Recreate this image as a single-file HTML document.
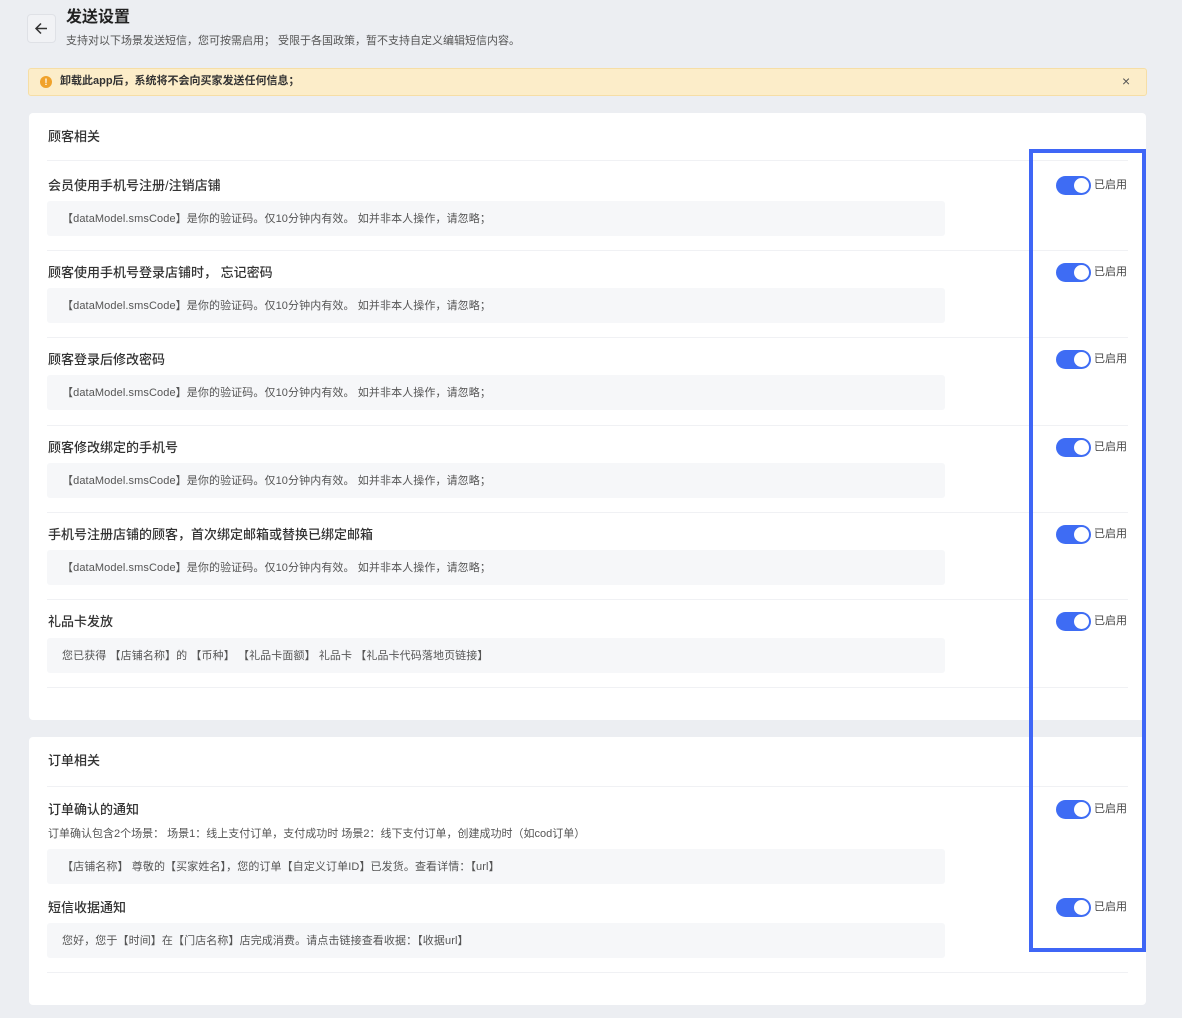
<!DOCTYPE html>
<html><head><meta charset="utf-8"><style>
*{margin:0;padding:0;box-sizing:border-box}
body{width:1182px;height:1018px;background:#eceef2;font-family:"Liberation Sans","Noto Sans CJK SC",sans-serif;position:relative;overflow:hidden;color:#333}
.a{position:absolute;white-space:nowrap}
.card{position:absolute;left:29px;width:1117px;background:#fff;border-radius:4px}
.hr{position:absolute;left:47px;width:1081px;height:1px;background:#f0f1f4}
.t{position:absolute;left:48px;font-size:13px;font-weight:500;color:#333;line-height:16px}
.box{position:absolute;left:47px;width:898px;height:35px;background:#f6f7f9;border-radius:3px;font-size:11px;color:#555;line-height:36px;padding-left:15px;white-space:nowrap;letter-spacing:0.1px}
.tg{position:absolute;left:1056px;width:35px;height:19px;background:#3e6cf4;border-radius:10px}
.tg::after{content:"";position:absolute;right:2px;top:2px;width:15px;height:15px;background:#fff;border-radius:50%}
.tl{position:absolute;left:1094px;font-size:11px;color:#444;line-height:14px}
</style></head><body>
<div class="a" style="left:27px;top:14px;width:29px;height:29px;border:1px solid #dfe1e6;border-radius:4px;background:#f1f2f5"></div>
<svg class="a" style="left:33px;top:20px" width="17" height="17" viewBox="0 0 17 17"><path d="M14 8.5H3M8 3.5L3 8.5L8 13.5" stroke="#333" stroke-width="1.5" fill="none"/></svg>
<div class="a" style="left:66px;top:8px;font-size:16px;font-weight:700;color:#222;line-height:20px">发送设置</div>
<div class="a" style="left:66px;top:34px;font-size:11px;color:#555;line-height:14px">支持对以下场景发送短信，您可按需启用； 受限于各国政策，暂不支持自定义编辑短信内容。</div>
<div class="a" style="left:28px;top:68px;width:1119px;height:28px;background:#fcedc9;border:1px solid #f6dea6;border-radius:3px"></div>
<div class="a" style="left:40px;top:76px;width:12px;height:12px;border-radius:50%;background:#f0a22b;color:#fff;font-size:9px;font-weight:700;text-align:center;line-height:12px">!</div>
<div class="a" style="left:60px;top:74px;font-size:11px;font-weight:600;color:#333;line-height:15px">卸载此app后，系统将不会向买家发送任何信息；</div>
<div class="a" style="left:1122px;top:73px;font-size:14px;color:#555;line-height:16px">×</div>

<div class="card" style="top:113px;height:607px"></div>
<div class="t" style="top:129px">顾客相关</div>
<div class="hr" style="top:160px"></div>

<div class="t" style="top:178px">会员使用手机号注册/注销店铺</div>
<div class="box" style="top:201px">【dataModel.smsCode】是你的验证码。仅10分钟内有效。 如并非本人操作，请忽略；</div>
<div class="hr" style="top:250px"></div>
<div class="t" style="top:265px">顾客使用手机号登录店铺时， 忘记密码</div>
<div class="box" style="top:288px">【dataModel.smsCode】是你的验证码。仅10分钟内有效。 如并非本人操作，请忽略；</div>
<div class="hr" style="top:337px"></div>
<div class="t" style="top:352px">顾客登录后修改密码</div>
<div class="box" style="top:375px">【dataModel.smsCode】是你的验证码。仅10分钟内有效。 如并非本人操作，请忽略；</div>
<div class="hr" style="top:425px"></div>
<div class="t" style="top:440px">顾客修改绑定的手机号</div>
<div class="box" style="top:463px">【dataModel.smsCode】是你的验证码。仅10分钟内有效。 如并非本人操作，请忽略；</div>
<div class="hr" style="top:512px"></div>
<div class="t" style="top:527px">手机号注册店铺的顾客，首次绑定邮箱或替换已绑定邮箱</div>
<div class="box" style="top:550px">【dataModel.smsCode】是你的验证码。仅10分钟内有效。 如并非本人操作，请忽略；</div>
<div class="hr" style="top:599px"></div>
<div class="t" style="top:614px">礼品卡发放</div>
<div class="box" style="top:638px">您已获得 【店铺名称】的 【币种】 【礼品卡面额】 礼品卡 【礼品卡代码落地页链接】</div>
<div class="hr" style="top:687px"></div>

<div class="card" style="top:737px;height:268px"></div>
<div class="t" style="top:753px">订单相关</div>
<div class="hr" style="top:786px"></div>
<div class="t" style="top:802px">订单确认的通知</div>
<div class="a" style="left:48px;top:827px;font-size:11px;color:#555;line-height:14px">订单确认包含2个场景： 场景1：线上支付订单，支付成功时 场景2：线下支付订单，创建成功时（如cod订单）</div>
<div class="box" style="top:849px">【店铺名称】 尊敬的【买家姓名】，您的订单【自定义订单ID】已发货。查看详情：【url】</div>
<div class="t" style="top:900px">短信收据通知</div>
<div class="box" style="top:923px">您好，您于【时间】在【门店名称】店完成消费。请点击链接查看收据：【收据url】</div>
<div class="hr" style="top:972px"></div>

<div class="tg" style="top:176px"></div><div class="tl" style="top:178px">已启用</div>
<div class="tg" style="top:263px"></div><div class="tl" style="top:265px">已启用</div>
<div class="tg" style="top:350px"></div><div class="tl" style="top:352px">已启用</div>
<div class="tg" style="top:438px"></div><div class="tl" style="top:440px">已启用</div>
<div class="tg" style="top:525px"></div><div class="tl" style="top:527px">已启用</div>
<div class="tg" style="top:612px"></div><div class="tl" style="top:614px">已启用</div>
<div class="tg" style="top:800px"></div><div class="tl" style="top:802px">已启用</div>
<div class="tg" style="top:898px"></div><div class="tl" style="top:900px">已启用</div>

<div class="a" style="left:1029px;top:149px;width:117px;height:803px;border:4px solid #3f66f6"></div>
</body></html>
